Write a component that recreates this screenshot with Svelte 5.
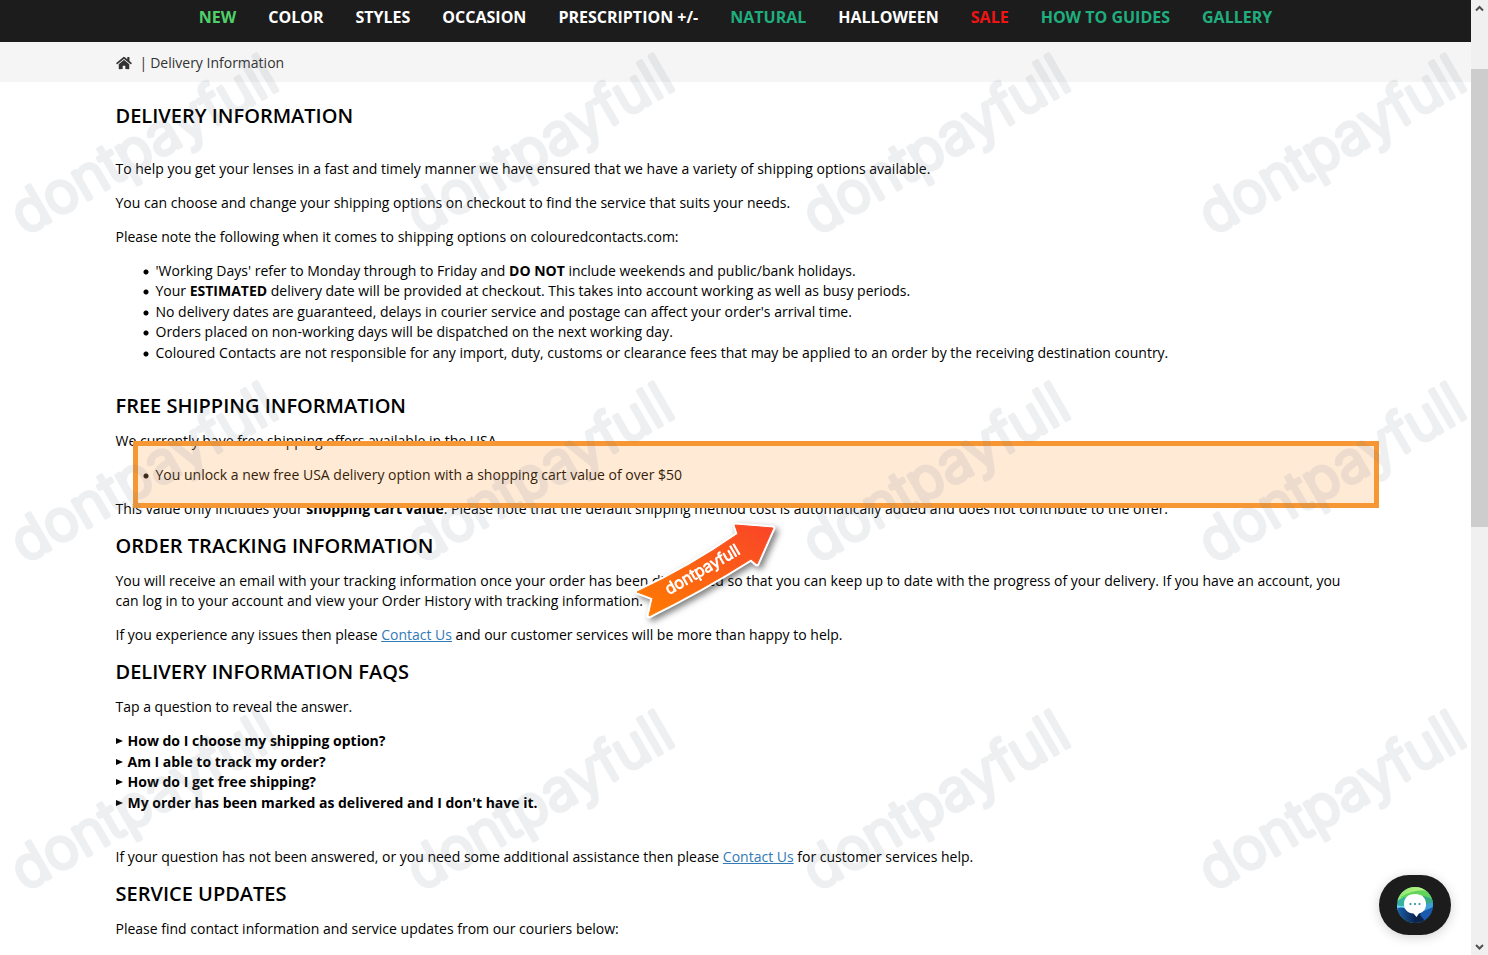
<script>
  const nav = [
    { label: 'NEW', tone: 'lime' },
    { label: 'COLOR' },
    { label: 'STYLES' },
    { label: 'OCCASION' },
    { label: 'PRESCRIPTION +/-' },
    { label: 'NATURAL', tone: 'teal' },
    { label: 'HALLOWEEN' },
    { label: 'SALE', tone: 'red' },
    { label: 'HOW TO GUIDES', tone: 'teal' },
    { label: 'GALLERY', tone: 'teal' }
  ];

  const faqs = [
    'How do I choose my shipping option?',
    'Am I able to track my order?',
    'How do I get free shipping?',
    "My order has been marked as delivered and I don't have it."
  ];

  // Watermark grid: one tile every 396 x 328.
  const marks = [0, 1, 2].flatMap((row) =>
    [0, 1, 2, 3].map((col) => ({ x: 25 + col * 396, y: 236 + row * 328 }))
  );
</script>

<div class="shell">
  <div class="page">
    <nav class="menu" aria-label="Main">
      {#each nav as item}
        <a href="#top" class={item.tone ?? ''}>{item.label}</a>
      {/each}
    </nav>

    <div class="crumbs">
      <div class="container crumb-row">
        <a href="#home" aria-label="Home">
          <svg width="16" height="14" viewBox="0 0 576 512" fill="currentColor">
            <path d="M280.37 148.26L96 300.11V464a16 16 0 0 0 16 16l112.06-.29a16 16 0 0 0 15.92-16V368a16 16 0 0 1 16-16h64a16 16 0 0 1 16 16v95.64a16 16 0 0 0 16 16.05L464 480a16 16 0 0 0 16-16V300L295.67 148.26a12.19 12.19 0 0 0-15.3 0zM571.6 251.47L488 182.56V44.05a12 12 0 0 0-12-12h-56a12 12 0 0 0-12 12v72.61L318.47 43a48 48 0 0 0-61 0L4.34 251.47a12 12 0 0 0-1.6 16.9l25.5 31A12 12 0 0 0 45.15 301l235.22-193.74a12.19 12.19 0 0 1 15.3 0L530.9 301a12 12 0 0 0 16.9-1.6l25.5-31a12 12 0 0 0-1.7-16.93z" />
          </svg>
        </a>
        <span class="bar">|</span>
        <span>Delivery Information</span>
      </div>
    </div>

    <main class="container">
      <h1>DELIVERY INFORMATION</h1>
      <p>To help you get your lenses in a fast and timely manner we have ensured that we have a variety of shipping options available.</p>
      <p>You can choose and change your shipping options on checkout to find the service that suits your needs.</p>
      <p>Please note the following when it comes to shipping options on colouredcontacts.com:</p>
      <ul class="notes">
        <li>'Working Days' refer to Monday through to Friday and <b>DO NOT</b> include weekends and public/bank holidays.</li>
        <li>Your <b>ESTIMATED</b> delivery date will be provided at checkout. This takes into account working as well as busy periods.</li>
        <li>No delivery dates are guaranteed, delays in courier service and postage can affect your order's arrival time.</li>
        <li>Orders placed on non-working days will be dispatched on the next working day.</li>
        <li>Coloured Contacts are not responsible for any import, duty, customs or clearance fees that may be applied to an order by the receiving destination country.</li>
      </ul>

      <h2>FREE SHIPPING INFORMATION</h2>
      <p>We currently have free shipping offers available in the USA.</p>
      <div class="offer">
        <ul>
          <li>You unlock a new free USA delivery option with a shopping cart value of over $50</li>
        </ul>
        <div class="highlight"></div>
        <svg class="arrow" width="170" height="120" viewBox="0 0 170 120">
          <defs>
            <linearGradient id="arrowFill" x1="0" y1="1" x2="1" y2="0">
              <stop offset="0" stop-color="#ff7d00" />
              <stop offset="1" stop-color="#f94429" />
            </linearGradient>
          </defs>
          <path
            d="M17 82 Q69 58 118 24 L115 15 L153 18 L137 54 L131 49 Q82 80 29 106 L33 88 Z"
            fill="#fff"
            stroke="#fff"
            stroke-width="5"
            stroke-linejoin="round"
          />
          <path
            d="M17 82 Q69 58 118 24 L115 15 L153 18 L137 54 L131 49 Q82 80 29 106 L33 88 Z"
            fill="url(#arrowFill)"
            stroke="url(#arrowFill)"
            stroke-width="1"
            stroke-linejoin="round"
          />
          <text transform="translate(49 85) rotate(-30)">dontpayfull</text>
        </svg>
      </div>
      <p>This value only includes your <b>shopping cart value</b>. Please note that the default shipping method cost is automatically added and does not contribute to the offer.</p>

      <h2>ORDER TRACKING INFORMATION</h2>
      <p>You will receive an email with your tracking information once your order has been dispatched so that you can keep up to date with the progress of your delivery. If you have an account, you can log in to your account and view your Order History with tracking information.</p>
      <p>If you experience any issues then please <a href="#contact">Contact Us</a> and our customer services will be more than happy to help.</p>

      <h2>DELIVERY INFORMATION FAQS</h2>
      <p>Tap a question to reveal the answer.</p>
      <div class="faqs">
        {#each faqs as question}
          <details><summary>{question}</summary></details>
        {/each}
      </div>
      <p>If your question has not been answered, or you need some additional assistance then please <a href="#contact">Contact Us</a> for customer services help.</p>

      <h2>SERVICE UPDATES</h2>
      <p>Please find contact information and service updates from our couriers below:</p>
    </main>
  </div>

  <div class="scroll" aria-hidden="true">
    <svg width="17" height="17" viewBox="0 0 17 17"><path d="M5 10.5 L8.5 7 L12 10.5" /></svg>
    <div class="before"></div>
    <div class="thumb"></div>
    <div class="after"></div>
    <svg width="17" height="17" viewBox="0 0 17 17"><path d="M5 7 L8.5 10.5 L12 7" /></svg>
  </div>

  <svg class="marks" aria-hidden="true">
    {#each marks as m}
      <text transform="translate({m.x} {m.y}) rotate(-30)">dontpayfull</text>
    {/each}
  </svg>

  <button class="chat" aria-label="Open chat">
    <svg width="36" height="36" viewBox="0 0 36 36">
      <defs>
        <clipPath id="disc"><circle cx="18" cy="18" r="18" /></clipPath>
        <linearGradient id="lime" x1="0" x2="1"><stop offset="0" stop-color="#8be86e" /><stop offset="1" stop-color="#ccf78e" /></linearGradient>
        <linearGradient id="navy" x1="0" x2="1"><stop offset="0" stop-color="#1b62ae" /><stop offset="0.500" stop-color="#0c2450" /><stop offset="1" stop-color="#0a1f4a" /></linearGradient>
      </defs>
      <g clip-path="url(#disc)">
        <rect width="36" height="36" fill="#35b3a0" />
        <path d="M0 0H36V6Q20 2 10 8L0 14Z" fill="url(#lime)" />
        <path d="M4 10Q20 0 36 5V14Q24 6 4 11Z" fill="#62d45c" />
        <path d="M24 9Q31 9 36 13V20H26Z" fill="#38a985" />
        <path d="M0 18Q4 20 10 18V26L0 23Z" fill="#6ad6f6" />
        <path d="M0 21Q8 19 12 25L28 26L36 18V36H0Z" fill="url(#navy)" />
        <path d="M27 20L36 18V28L28 34L23 28Z" fill="#1a59ae" />
        <path d="M27 18L36 15V20L27 24Z" fill="#3f9fd8" />
      </g>
      <path d="M18 7C25 7 29 11 29 17C29 22.500 26 25.500 22 26.500L19.500 30L16.500 26.500C11 26.500 7 22.500 7 17C7 11 11 7 18 7Z" fill="#fff" />
      <g fill="#2a8fa8"><circle cx="13.500" cy="17" r="1.100" /><circle cx="18" cy="17" r="1.100" /><circle cx="22.500" cy="17" r="1.100" /></g>
    </svg>
  </button>
</div>

<style>
  :global(body) {
    margin: 0;
    background: #fff;
  }

  .shell {
    position: relative;
    display: flex;
    height: 100vh;
    overflow: hidden;
    font: 14px/20px 'Open Sans', sans-serif;
    color: #000;
  }

  .page {
    flex: 1;
    min-width: 0;
  }

  .container {
    max-width: 1240px;
    margin: 0 auto;
  }

  .menu {
    position: relative;
    z-index: 3;
    display: flex;
    justify-content: center;
    gap: 32px;
    padding: 5px 0 13px;
    background: #1c1c1c;
    font-size: 16px;
    line-height: 24px;
    font-weight: 700;
    white-space: nowrap;
  }

  .menu a {
    color: #fff;
    text-decoration: none;
  }

  .menu .lime { color: #4fd069; }
  .menu .teal { color: #1fae7e; }
  .menu .red { color: #f01414; }

  .crumbs {
    padding: 11px 0 9px;
    background: #f5f5f5;
    color: #333;
  }

  .crumb-row {
    display: flex;
    align-items: center;
  }

  .crumb-row a {
    display: flex;
    color: #333;
  }

  .bar {
    margin: 0 3px 0 8px;
  }

  h1,
  h2 {
    margin: 14px 0 12px;
    font-size: 20px;
    line-height: 26px;
    font-weight: 600;
  }

  h1 {
    margin: 21px 0 30px;
  }

  p {
    margin: 0 0 14px;
  }

  p a {
    color: #337ab7;
  }

  ul {
    margin: 0;
    padding: 0 0 0 27px;
    list-style: none;
  }

  li {
    padding-left: 13px;
    background: radial-gradient(circle at 3px 11px, #000 2px, transparent 3px);
  }

  .notes {
    margin-bottom: 30px;
    line-height: 1.46;
  }

  .offer {
    position: relative;
    margin-bottom: 14px;
  }

  .highlight {
    position: absolute;
    top: -24px;
    right: -23px;
    bottom: -23px;
    left: 17px;
    border: 5px solid #f79733;
    background: rgba(255, 150, 51, 0.2);
  }

  .arrow {
    position: absolute;
    top: 45px;
    left: 504px;
    z-index: 3;
    filter: drop-shadow(3px 3px 3px rgba(0, 0, 0, 0.5));
  }

  .arrow text {
    font: 300 16px Inter, sans-serif;
    fill: #fff;
    stroke: #fff;
    stroke-width: 1px;
    stroke-linejoin: round;
  }

  .faqs {
    margin-bottom: 34px;
    line-height: 1.46;
    font-weight: 700;
  }

  summary {
    display: flex;
    align-items: center;
    gap: 5px;
    list-style: none;
  }

  summary::before {
    content: '';
    border: solid transparent;
    border-width: 3px 0 3px 7px;
    border-left-color: #000;
  }

  .scroll {
    display: flex;
    flex-direction: column;
    width: 17px;
    background: #f0f0f0;
  }

  .scroll path {
    fill: none;
    stroke: #505050;
    stroke-width: 2px;
  }

  .before { flex: 52; }
  .thumb { flex: 458; background: #cdcdcd; }
  .after { flex: 411; }

  .marks {
    position: absolute;
    inset: 0;
    z-index: 2;
    width: 100%;
    height: 100%;
    pointer-events: none;
    opacity: 0.12;
  }

  .marks text {
    font: 300 57px Inter, sans-serif;
    fill: #737f90;
    stroke: #737f90;
    stroke-width: 4px;
    stroke-linejoin: round;
  }

  .chat {
    position: absolute;
    right: 37px;
    bottom: 20px;
    z-index: 4;
    display: grid;
    place-items: center;
    width: 72px;
    height: 60px;
    padding: 0;
    border: 0;
    border-radius: 30px;
    background: #1c1c1c;
    box-shadow: 0 2px 12px rgba(0, 0, 0, 0.18);
  }
</style>
